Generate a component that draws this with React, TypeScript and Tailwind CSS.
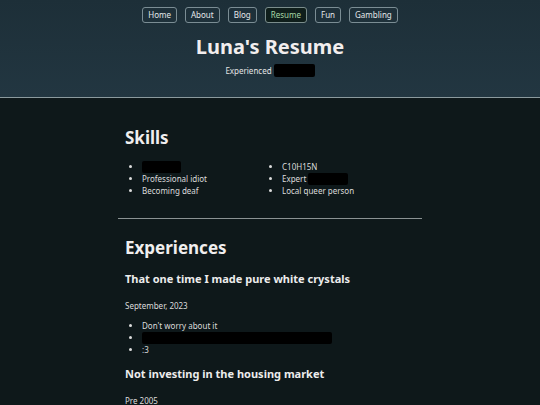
import React from "react";

const navItems = ["Home", "About", "Blog", "Resume", "Fun", "Gambling"];

function Redacted({ w }: { w: string }) {
  return <span className={`inline-block h-[12px] rounded-[2px] bg-black align-top ${w}`} />;
}

export default function App() {
  return (
    <div
      className="min-h-[405px] bg-[#0e181a] text-[#e6e6e6]"
      style={{ fontFamily: '"Noto Sans", "Open Sans", sans-serif' }}
    >
      <header className="flex h-[98px] flex-col items-center border-b border-[#8b9a9e] bg-gradient-to-b from-[#1d2f38] to-[#223641] pt-[7px]">
        <nav className="flex gap-[8px]">
          {navItems.map((item) => (
            <span
              key={item}
              className={
                item === "Resume"
                  ? "flex h-[16px] items-center rounded-[3px] border border-[#7b8d8c] bg-[#0f1e1b] px-[5px] text-[8px] text-[#a6d8a6]"
                  : "flex h-[16px] items-center rounded-[3px] border border-[#7b8d94] px-[5px] text-[8px] text-[#e4e8ea]"
              }
            >
              {item}
            </span>
          ))}
        </nav>
        <h1 className="mt-[10px] text-[20px] font-bold leading-[28px] text-[#f2eeee]">Luna's Resume</h1>
        <div className="mt-[3px] flex h-[13px] items-center gap-[2px] text-[8px] text-[#e4e4e4]">
          <span>Experienced</span>
          <span className="inline-block h-[13px] w-[41px] rounded-[2px] bg-black" />
        </div>
      </header>

      <main className="mx-auto w-[304px] pt-[29px]">
        <section className="px-[7px]">
          <h2 className="text-[17px] font-bold leading-[22px] text-[#f0eeee]">Skills</h2>
          <div className="mt-[12px] grid grid-cols-[140px_140px] text-[8px] leading-[12px] text-[#dcdcdc]">
            <ul className="list-disc pl-[17px]">
              <li>
                <Redacted w="w-[39px]" />
              </li>
              <li>Professional idiot</li>
              <li>Becoming deaf</li>
            </ul>
            <ul className="list-disc pl-[17px]">
              <li>C10H15N</li>
              <li>
                Expert <Redacted w="w-[40px]" />
              </li>
              <li>Local queer person</li>
            </ul>
          </div>
        </section>

        <hr className="mt-[21px] border-t border-[#8a9293]" />

        <section className="px-[7px]">
          <h2 className="mt-[18px] text-[17px] font-bold leading-[22px] text-[#f0eeee]">Experiences</h2>
          <h3 className="mt-[13px] text-[11px] font-bold leading-[14px] text-[#ececec]">
            That one time I made pure white crystals
          </h3>
          <p className="mt-[14px] text-[8px] leading-[12px] text-[#dcdcdc]">September, 2023</p>
          <ul className="mt-[8px] list-disc pl-[17px] text-[8px] leading-[12px] text-[#dcdcdc]">
            <li>Don't worry about it</li>
            <li>
              <Redacted w="w-[190px]" />
            </li>
            <li>:3</li>
          </ul>
          <h3 className="mt-[11px] text-[11px] font-bold leading-[14px] text-[#ececec]">
            Not investing in the housing market
          </h3>
          <p className="mt-[14px] text-[8px] leading-[12px] text-[#dcdcdc]">Pre 2005</p>
        </section>
      </main>
    </div>
  );
}
